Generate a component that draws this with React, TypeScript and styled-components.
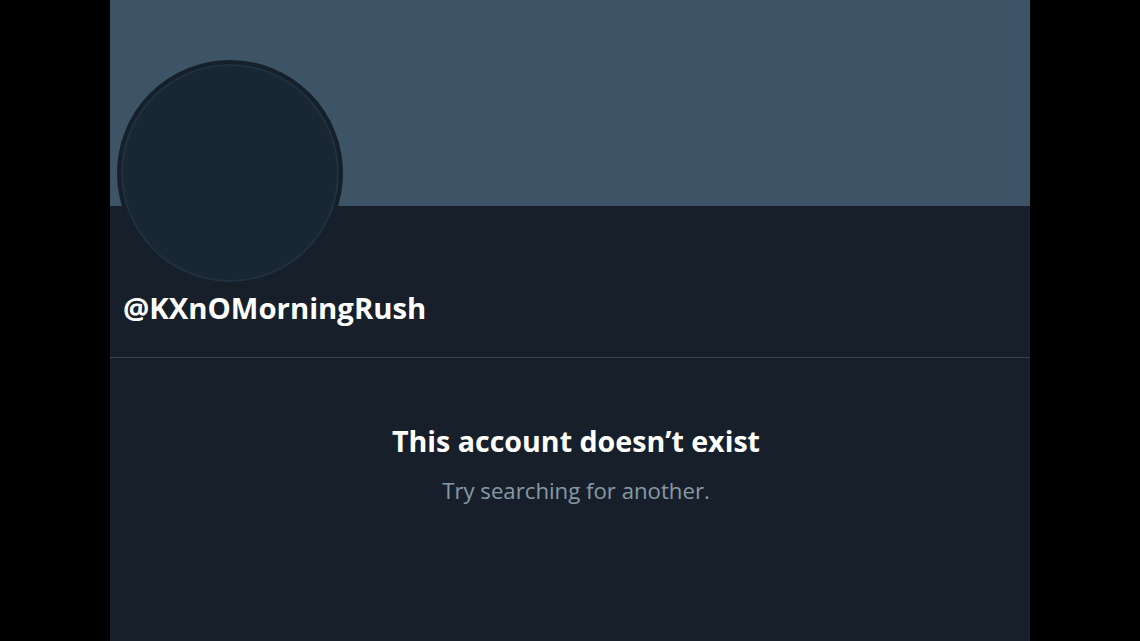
import React from "react";
import styled, { createGlobalStyle } from "styled-components";

const Global = createGlobalStyle`
  html, body { margin: 0; padding: 0; background: #000; }
  body { width: 1140px; height: 641px; overflow: hidden; font-family: "Open Sans", "Noto Sans", sans-serif; }
`;

const Stage = styled.div`
  width: 1140px;
  height: 641px;
  background: #000;
  display: flex;
  justify-content: center;
`;

const Column = styled.main`
  width: 920px;
  height: 641px;
  background: #17202a;
  display: flex;
  flex-direction: column;
`;

const Banner = styled.div`
  height: 206px;
  background: #3d5467;
  flex-shrink: 0;
`;

const ProfileHead = styled.div`
  position: relative;
  padding: 0 0 0 13px;
  height: 151px;
  border-bottom: 1px solid #38444d;
  display: flex;
  align-items: flex-end;
`;

const Avatar = styled.div`
  position: absolute;
  left: 7px;
  top: -146px;
  width: 218px;
  height: 218px;
  border-radius: 50%;
  background: #192734;
  border: 4px solid #15202b;
  box-shadow: inset 0 0 0 2px #223140;
`;

const Handle = styled.h1`
  margin: 0 0 29px 0;
  font-size: 29.3px;
  font-weight: 700;
  color: #ffffff;
`;

const Empty = styled.section`
  display: flex;
  flex-direction: column;
  align-items: center;
  padding: 63px 0 0 12px;
`;

const Title = styled.h2`
  margin: 0;
  font-size: 28.6px;
  font-weight: 700;
  color: #ffffff;
`;

const Sub = styled.p`
  margin: 15px 0 0 0;
  font-size: 22.2px;
  color: #8899a6;
`;

export default function App() {
  return (
    <>
      <Global />
      <Stage>
        <Column>
          <Banner />
          <ProfileHead>
            <Avatar />
            <Handle>@KXnOMorningRush</Handle>
          </ProfileHead>
          <Empty>
            <Title>This account doesn’t exist</Title>
            <Sub>Try searching for another.</Sub>
          </Empty>
        </Column>
      </Stage>
    </>
  );
}
